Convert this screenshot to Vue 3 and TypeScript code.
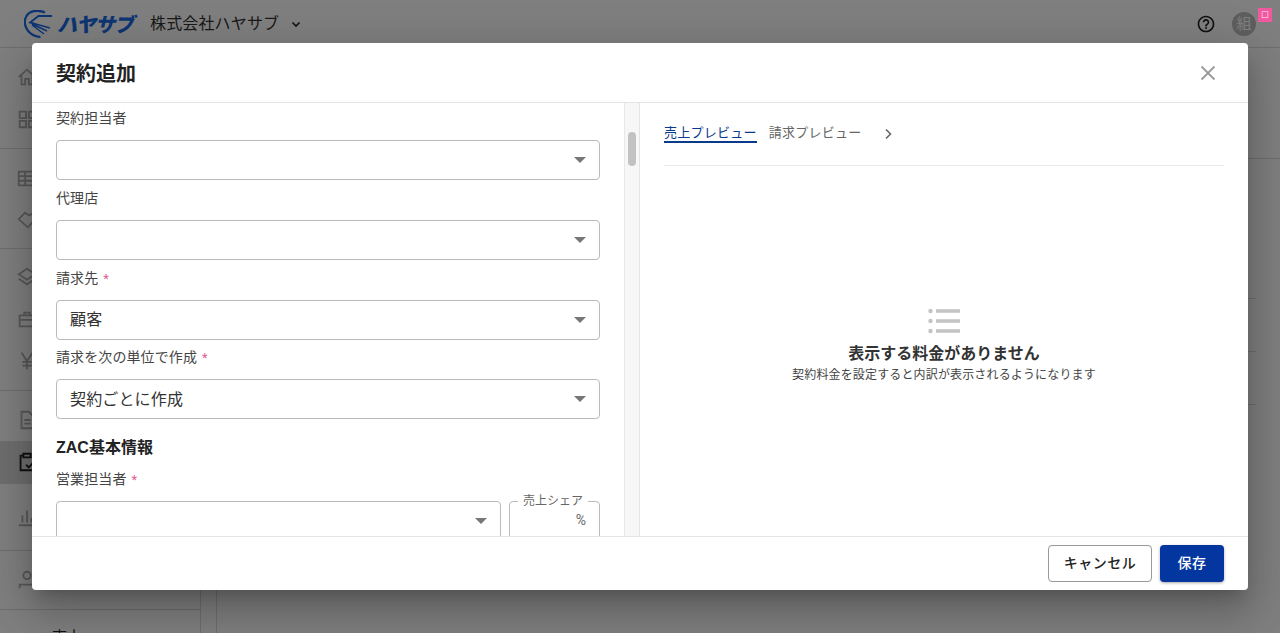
<template>
  <div class="page">
    <header class="topbar">
      <div class="logo">
        <svg width="29" height="28" viewBox="0 0 29 28" fill="none" stroke="#1a6ae6">
          <path d="M21 2.500C14-.5 5 .5 2 7-1 13 2 21 9 25c2.500 1.300 5 1.800 7.500 2" stroke-width="2.200" />
          <path d="M28 6H14.500L6 12.500l5.500 1.500" stroke-width="1.800" />
          <path d="M8 13l18 5M8 14l15 7M8 15l12 9" stroke-width="1.500" />
        </svg>
        <span class="logo-text">ハヤサブ</span>
      </div>
      <span class="company">株式会社ハヤサブ</span>
      <svg class="company-caret" width="12" height="12" viewBox="0 0 12 12" fill="none" stroke="#222" stroke-width="1.600">
        <path d="M2.500 4.500L6 8l3.500-3.500" />
      </svg>
      <div class="spacer" />
      <svg width="20" height="20" viewBox="0 0 24 24" fill="#222">
        <path d="M11 18h2v-2h-2v2zm1-16C6.480 2 2 6.480 2 12s4.480 10 10 10 10-4.480 10-10S17.520 2 12 2zm0 18c-4.410 0-8-3.590-8-8s3.590-8 8-8 8 3.590 8 8-3.590 8-8 8zm0-14c-2.210 0-4 1.790-4 4h2c0-1.100.9-2 2-2s2 .9 2 2c0 2-3 1.750-3 5h2c0-2.250 3-2.500 3-5 0-2.210-1.790-4-4-4z" />
      </svg>
      <div class="avatar">
        組
        <span class="badge">ロ</span>
      </div>
    </header>

    <div class="under">
      <nav class="sidenav">
        <div v-for="(group, i) in navGroups" :key="i" class="nav-group">
          <div v-for="item in group" :key="item" class="nav-item" :class="{ active: item === 'clip' }">
            <svg width="22" height="22" viewBox="0 0 24 24" fill="none" stroke="currentColor" stroke-width="2">
              <path :d="icons[item]" />
            </svg>
          </div>
        </div>
        <div class="nav-bottom"><i class="nav-mark" />売上</div>
      </nav>
      <div class="subnav" />
      <main class="content">
        <div class="content-head" />
        <div class="content-table">
          <div class="content-row" />
          <div class="content-row" />
          <div class="content-row" />
        </div>
      </main>
    </div>

    <div class="overlay" />

    <section class="dialog">
      <div class="dialog-head">
        <h1>契約追加</h1>
        <svg width="24" height="24" viewBox="0 0 24 24" fill="none" stroke="#9a9a9a" stroke-width="1.800">
          <path d="M5.500 5.500l13 13M18.500 5.500l-13 13" />
        </svg>
      </div>

      <div class="dialog-body">
        <div class="form-pane">
          <div class="form">
            <div v-for="f in fields" :key="f.label" class="field">
              <label>{{ f.label }}<span v-if="f.required" class="req">*</span></label>
              <div class="select">
                <span>{{ f.value }}</span>
                <i class="arrow" />
              </div>
            </div>

            <h2>ZAC基本情報</h2>

            <div class="field">
              <label>営業担当者<span class="req">*</span></label>
              <div class="share-row">
                <div class="select grow"><span /><i class="arrow" /></div>
                <fieldset class="share">
                  <legend>売上シェア</legend>
                  <span>%</span>
                </fieldset>
              </div>
            </div>
          </div>
        </div>

        <div class="scroll-track"><div class="scroll-thumb" /></div>

        <div class="preview-pane">
          <div class="tabs">
            <span class="tab on">売上プレビュー</span>
            <span class="tab">請求プレビュー</span>
            <svg width="20" height="20" viewBox="0 0 20 20" fill="none" stroke="#666" stroke-width="1.600">
              <path d="M8 5.500l4.500 4.500L8 14.500" />
            </svg>
          </div>
          <div class="empty">
            <svg width="32" height="26" viewBox="0 0 32 26" fill="#c4c4c4">
              <circle cx="2.500" cy="3" r="2.200" />
              <circle cx="2.500" cy="13" r="2.200" />
              <circle cx="2.500" cy="23" r="2.200" />
              <rect x="8" y="1.250" width="24" height="3.500" />
              <rect x="8" y="11.250" width="24" height="3.500" />
              <rect x="8" y="21.250" width="24" height="3.500" />
            </svg>
            <strong>表示する料金がありません</strong>
            <p>契約料金を設定すると内訳が表示されるようになります</p>
          </div>
        </div>
      </div>

      <div class="dialog-foot">
        <button class="btn">キャンセル</button>
        <button class="btn primary">保存</button>
      </div>
    </section>
  </div>
</template>

<script setup lang="ts">
const fields = [
  { label: '契約担当者', value: '', required: false },
  { label: '代理店', value: '', required: false },
  { label: '請求先', value: '顧客', required: true },
  { label: '請求を次の単位で作成', value: '契約ごとに作成', required: true },
]

const icons: Record<string, string> = {
  home: 'M3 12l9-8 9 8M6 10v10h4v-6h4v6h4V10',
  grid: 'M4 4h7v7H4zM14 4h7v7h-7zM4 14h7v7H4zM14 14h7v7h-7z',
  table: 'M3 5h18v15H3zM3 10h18M3 15h18M10 5v15',
  hand: 'M3 11l7-7 4 3 4-2 4 5-9 10-8-7z',
  layers: 'M12 3l9 6-9 6-9-6zM3 14l9 6 9-6',
  bag: 'M4 8h16v12H4zM9 8V5h6v3M4 13h16',
  yen: 'M6 3l6 9 6-9M12 12v9M7 13h10M7 17h10',
  doc: 'M6 3h8l5 5v13H6zM9 12h7M9 16h7',
  clip: 'M8 5H5v16h14v-6M8 3h8v4H8zM11 15l3 3 6-7',
  chart: 'M3 21h18M7 18v-8M12 18V5M17 18v-5',
  user: 'M12 3a4 4 0 100 8 4 4 0 000-8zM4 21v-4h16v4',
}

const navGroups = [
  ['home', 'grid'],
  ['table', 'hand'],
  ['layers', 'bag', 'yen'],
  ['doc', 'clip'],
  ['chart'],
  ['user'],
]
</script>

<style scoped>
.page {
  position: relative;
  width: 1280px;
  height: 633px;
  overflow: hidden;
  background: #fff;
  font-family: Roboto, 'Noto Sans CJK JP', sans-serif;
  color: #222;
}
.topbar {
  height: 48px;
  box-sizing: border-box;
  display: flex;
  align-items: center;
  padding: 0 24px;
  border-bottom: 1px solid #ddd;
  background: #fff;
}
.logo { display: flex; align-items: center; gap: 4px; width: 126px; }
.logo-text {
  font-size: 20px;
  font-weight: 900;
  font-style: italic;
  letter-spacing: -1px;
  color: #1a6ae6;
}
.company { font-size: 16px; color: #333; letter-spacing: 0.15px; margin-bottom: 4px; }
.company-caret { margin-left: 11px; }
.spacer { flex: 1; }
.avatar {
  position: relative;
  width: 24px;
  height: 24px;
  margin-left: 16px;
  border-radius: 50%;
  background: #bcbcbc;
  color: #fff;
  font-size: 15px;
  line-height: 24px;
  text-align: center;
}
.badge {
  position: absolute;
  z-index: 2;
  top: -4px;
  right: -16px;
  width: 14px;
  height: 14px;
  background: #f0589f;
  color: #ffc0dc;
  font-size: 9px;
  line-height: 14px;
}
.under { display: flex; height: 585px; }
.sidenav { width: 200px; border-right: 1px solid #ddd; flex-shrink: 0; }
.nav-group { border-bottom: 1px solid #ddd; padding: 8px 0; }
.nav-group:nth-child(2) { padding-bottom: 7px; }
.nav-group:nth-child(3) { padding-top: 7px; }
.nav-group:nth-child(4) { padding-bottom: 0; }
.nav-group:nth-child(5) { padding: 12px 0; }
.nav-item {
  height: 42px;
  display: flex;
  align-items: center;
  padding-left: 16px;
  color: #b0b0b0;
}
.nav-item.active { background: #dcdcdc; color: #222; }
.nav-bottom {
  display: flex;
  align-items: center;
  gap: 14px;
  padding: 15px 0 0 33px;
  font-size: 15px;
}
.nav-mark { width: 5px; height: 5px; background: #999; }
.subnav { width: 15px; border-right: 1px solid #ddd; flex-shrink: 0; }
.content { flex: 1; min-width: 0; }
.content-head { height: 110px; border-bottom: 1px solid #ddd; }
.content-table { margin: 87px 24px 0 0; }
.content-row { height: 52px; border-bottom: 1px solid #ddd; }
.overlay { position: absolute; inset: 0; background: rgba(0, 0, 0, 0.5); }

.dialog {
  position: absolute;
  left: 32px;
  top: 43px;
  width: 1216px;
  height: 547px;
  display: flex;
  flex-direction: column;
  background: #fff;
  border-radius: 4px;
  overflow: hidden;
  box-shadow: 0 11px 15px -7px rgba(0, 0, 0, 0.2), 0 24px 38px 3px rgba(0, 0, 0, 0.14), 0 9px 46px 8px rgba(0, 0, 0, 0.12);
}
.dialog-head {
  height: 60px;
  flex-shrink: 0;
  display: flex;
  align-items: center;
  justify-content: space-between;
  padding: 0 28px 0 24px;
  border-bottom: 1px solid #e5e5e5;
  box-sizing: border-box;
}
h1 { margin: 0; font-size: 20px; font-weight: 700; color: #222; }
.dialog-body { flex: 1; min-height: 0; display: flex; }
.form-pane { width: 592px; flex-shrink: 0; overflow: hidden; }
.form { padding: 4px 24px 0; }
.field { margin-bottom: 6.75px; }
.field label { display: block; height: 22px; font-size: 14px; line-height: 23px; color: #444; margin-bottom: 11px; letter-spacing: 0.1px; }
.req { margin-left: 5px; color: #e0608f; font-size: 13px; line-height: 0; }
.select {
  height: 40px;
  box-sizing: border-box;
  display: flex;
  align-items: center;
  justify-content: space-between;
  padding: 0 13px;
  border: 1px solid #bbb;
  border-radius: 4px;
  font-size: 16px;
  letter-spacing: 0.15px;
  color: #333;
}
.select span { margin-bottom: 3px; }
.arrow {
  width: 0;
  height: 0;
  border-left: 6px solid transparent;
  border-right: 6px solid transparent;
  border-top: 6px solid #777;
}
h2 {
  height: 24px;
  margin: 16px 0 9px;
  font-family: 'Liberation Sans', 'Noto Sans CJK JP', sans-serif;
  font-size: 16px;
  line-height: 26px;
  font-weight: 700;
  color: #222;
}
.share-row { display: flex; gap: 8px; }
.grow { flex: 1; }
.share {
  width: 91px;
  min-width: 0;
  height: 50px;
  box-sizing: border-box;
  flex-shrink: 0;
  margin: -6px 0 0;
  padding: 0 13px;
  border: 1px solid #bbb;
  border-radius: 4px;
  font-size: 14px;
  color: #666;
  text-align: right;
}
.share legend {
  margin-left: -5px;
  padding: 0 5px;
  font-size: 12px;
  line-height: 12px;
  text-align: left;
  white-space: nowrap;
}
.share span { display: block; margin-top: 3px; line-height: 20px; }
.scroll-track {
  width: 16px;
  flex-shrink: 0;
  background: #f7f7f7;
  border-left: 1px solid #e8e8e8;
  border-right: 1px solid #e4e4e4;
  box-sizing: border-box;
  padding-top: 29px;
}
.scroll-thumb { width: 8px; height: 34px; margin: 0 auto; border-radius: 4px; background: #c2c2c2; }
.preview-pane { flex: 1; display: flex; flex-direction: column; padding: 0 24px; min-width: 0; }
.tabs {
  height: 63px;
  flex-shrink: 0;
  box-sizing: border-box;
  display: flex;
  align-items: flex-start;
  gap: 12px;
  padding-top: 22px;
  border-bottom: 1px solid #e8e8e8;
}
.tab { font-size: 13px; line-height: 16px; color: #666; letter-spacing: 0.25px; }
.tab.on { color: #0a3a8c; border-bottom: 2px solid #0a3a8c; }
.tabs svg { margin: -1px 0 0 4px; }
.empty {
  flex: 1;
  display: flex;
  flex-direction: column;
  align-items: center;
  padding-top: 142px;
}
.empty strong { margin-top: 8px; font-size: 16px; line-height: 24px; font-weight: 700; color: #333; }
.empty p { margin: 0; font-size: 12px; line-height: 18px; color: #444; letter-spacing: 0.15px; }
.dialog-foot {
  height: 54px;
  flex-shrink: 0;
  display: flex;
  justify-content: flex-end;
  align-items: center;
  gap: 8px;
  padding: 0 24px;
  border-top: 1px solid #e5e5e5;
  box-sizing: border-box;
}
.btn {
  height: 37px;
  width: 104px;
  padding: 0 0 3px;
  border: 1px solid #999;
  border-radius: 4px;
  background: #fff;
  font-family: inherit;
  font-size: 14px;
  font-weight: 500;
  color: #222;
  letter-spacing: 0.5px;
}
.btn.primary {
  width: 64px;
  border: none;
  background: #03379f;
  color: #fff;
  box-shadow: 0 1px 3px rgba(0, 0, 0, 0.35);
}
</style>
